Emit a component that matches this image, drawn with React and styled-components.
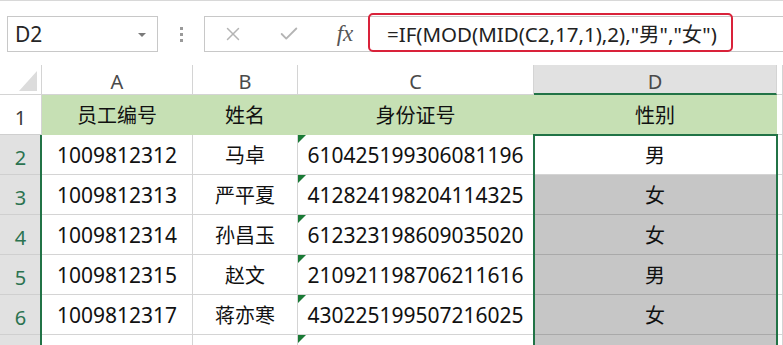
import React from 'react'
import styled, { createGlobalStyle } from 'styled-components'
import { X, Check } from 'lucide-react'

const GlobalStyle = createGlobalStyle`
  html, body { margin: 0; padding: 0; background: #fff; }
  body { font-family: "Noto Sans", "Noto Sans CJK SC", sans-serif; overflow: hidden; }
  * { box-sizing: border-box; }
`

const rows = [
  ['1009812312', '马卓', '610425199306081196', '男'],
  ['1009812313', '严平夏', '412824198204114325', '女'],
  ['1009812314', '孙昌玉', '612323198609035020', '女'],
  ['1009812315', '赵文', '210921198706211616', '男'],
  ['1009812317', '蒋亦寒', '430225199507216025', '女'],
  ['', '', '', ''],
]

const App = () => {
  return (
    <Page>
      <GlobalStyle />
      <FormulaBar>
        <NameBox>
          D2
          <Caret />
        </NameBox>
        <Dots>
          <span />
          <span />
          <span />
        </Dots>
        <FormulaArea>
          <IconSlot $w={56}><X size={22} strokeWidth={1.6} color="#b4b4b4" /></IconSlot>
          <IconSlot $w={56}><Check size={22} strokeWidth={2} color="#b4b4b4" /></IconSlot>
          <Fx>fx</Fx>
          <FormulaInput>=IF(MOD(MID(C2,17,1),2),"男","女")</FormulaInput>
        </FormulaArea>
      </FormulaBar>

      <Sheet>
        <Corner><Tri /></Corner>
        {['A', 'B', 'C', 'D'].map((c) => (
          <ColHead key={c} $active={c === 'D'}>{c}</ColHead>
        ))}
        <ColHead />

        <RowHead>1</RowHead>
        <Cell $green $cjk>员工编号</Cell>
        <Cell $green $cjk>姓名</Cell>
        <Cell $green $cjk>身份证号</Cell>
        <Cell $green $cjk>性别</Cell>
        <Cell />

        {rows.map((r, i) => (
          <React.Fragment key={i}>
            {/* row 7 number sits below the visible edge */}
            <RowHead $active>{i < 5 ? i + 2 : ''}</RowHead>
            <Cell>{r[0]}</Cell>
            <Cell $cjk>{r[1]}</Cell>
            <Cell>
              <Flag />
              {r[2]}
            </Cell>
            <Cell $cjk $grey={i > 0}>{r[3]}</Cell>
            <Cell />
          </React.Fragment>
        ))}
        <Selection />
        <RowEdge />
      </Sheet>
    </Page>
  )
}

export default App

const Page = styled.div`
  width: 783px;
  height: 345px;
  overflow: hidden;
  background: #fff;
  border-top: 1px solid #d8d8d8;
`

const FormulaBar = styled.div`
  display: flex;
  align-items: flex-start;
  height: 64px;
  padding: 15px 0 0 7px;
`

const NameBox = styled.div`
  position: relative;
  width: 151px;
  height: 36px;
  border: 1px solid #c8c8c8;
  padding-left: 7px;
  display: flex;
  align-items: center;
  font-size: 21px;
  color: #262626;
`

const Caret = styled.span`
  position: absolute;
  right: 11px;
  top: 16px;
  border-left: 4px solid transparent;
  border-right: 4px solid transparent;
  border-top: 4px solid #7a7a7a;
`

const Dots = styled.div`
  width: 46px;
  height: 36px;
  display: flex;
  flex-direction: column;
  align-items: center;
  justify-content: center;
  gap: 3px;
  span {
    width: 3px;
    height: 3px;
    background: #9a9a9a;
  }
`

const FormulaArea = styled.div`
  flex: 1;
  height: 36px;
  display: flex;
  border: 1px solid #c8c8c8;
  border-right: none;
`

const IconSlot = styled.div`
  width: ${(p) => p.$w}px;
  display: flex;
  align-items: center;
  justify-content: center;
`

const Fx = styled.div`
  width: 52px;
  display: flex;
  align-items: center;
  justify-content: center;
  font-family: "Liberation Serif", serif;
  font-style: italic;
  font-size: 23px;
  color: #555;
  padding-left: 4px;
`

const FormulaInput = styled.div`
  width: 365px;
  height: 39px;
  margin-top: -4px;
  margin-left: -1px;
  border: 2px solid #d9223a;
  border-radius: 5px;
  padding-left: 17px;
  display: flex;
  align-items: center;
  font-size: 20.5px;
  color: #222;
  white-space: nowrap;
`

const Sheet = styled.div`
  position: relative;
  display: grid;
  grid-template-columns: 42px 151px 105px 236px 243px 1fr;
  grid-template-rows: 30px repeat(7, 40px);
`

const Corner = styled.div`
  position: relative;
  border-right: 1px solid #d4d4d4;
  border-bottom: 1px solid #d4d4d4;
`

const Tri = styled.div`
  position: absolute;
  right: 4px;
  bottom: 3px;
  width: 0;
  height: 0;
  border-left: 18px solid transparent;
  border-bottom: 20px solid #dcdcdc;
`

const ColHead = styled.div`
  display: flex;
  align-items: center;
  justify-content: center;
  padding-top: 4px;
  font-size: 20px;
  color: #4a4a4a;
  background: ${(p) => (p.$active ? '#e1e1e1' : '#fff')};
  border-right: 1px solid #d4d4d4;
  border-bottom: ${(p) => (p.$active ? '2px solid #217346' : '1px solid #d4d4d4')};
`

const RowHead = styled.div`
  display: flex;
  align-items: flex-end;
  justify-content: center;
  padding-bottom: 3px;
  font-size: 20px;
  color: ${(p) => (p.$active ? '#2b7350' : '#3a3a3a')};
  background: ${(p) => (p.$active ? '#e1e1e1' : '#fff')};
  border-right: 1px solid #d4d4d4;
  border-bottom: 1px solid #cfcfcf;
`

const Cell = styled.div`
  position: relative;
  display: flex;
  align-items: center;
  justify-content: center;
  font-size: ${(p) => (p.$cjk ? '20px' : '21px')};
  color: #111;
  white-space: nowrap;
  background: ${(p) => (p.$green ? '#c6e0b4' : p.$grey ? '#c6c6c6' : '#fff')};
  border-right: 1px solid ${(p) => (p.$green ? '#c6e0b4' : '#d4d4d4')};
  border-bottom: 1px solid ${(p) => (p.$grey ? '#a9a9a9' : p.$green ? '#c6e0b4' : '#d4d4d4')};
`

const Flag = styled.span`
  position: absolute;
  left: 0;
  top: 0;
  border-top: 8px solid #1a7a36;
  border-right: 8px solid transparent;
`

const Selection = styled.div`
  position: absolute;
  left: 533px;
  top: 69px;
  width: 245px;
  height: 300px;
  border: 2px solid #217346;
  pointer-events: none;
`

const RowEdge = styled.div`
  position: absolute;
  left: 40px;
  top: 70px;
  width: 2px;
  height: 300px;
  background: #217346;
`
